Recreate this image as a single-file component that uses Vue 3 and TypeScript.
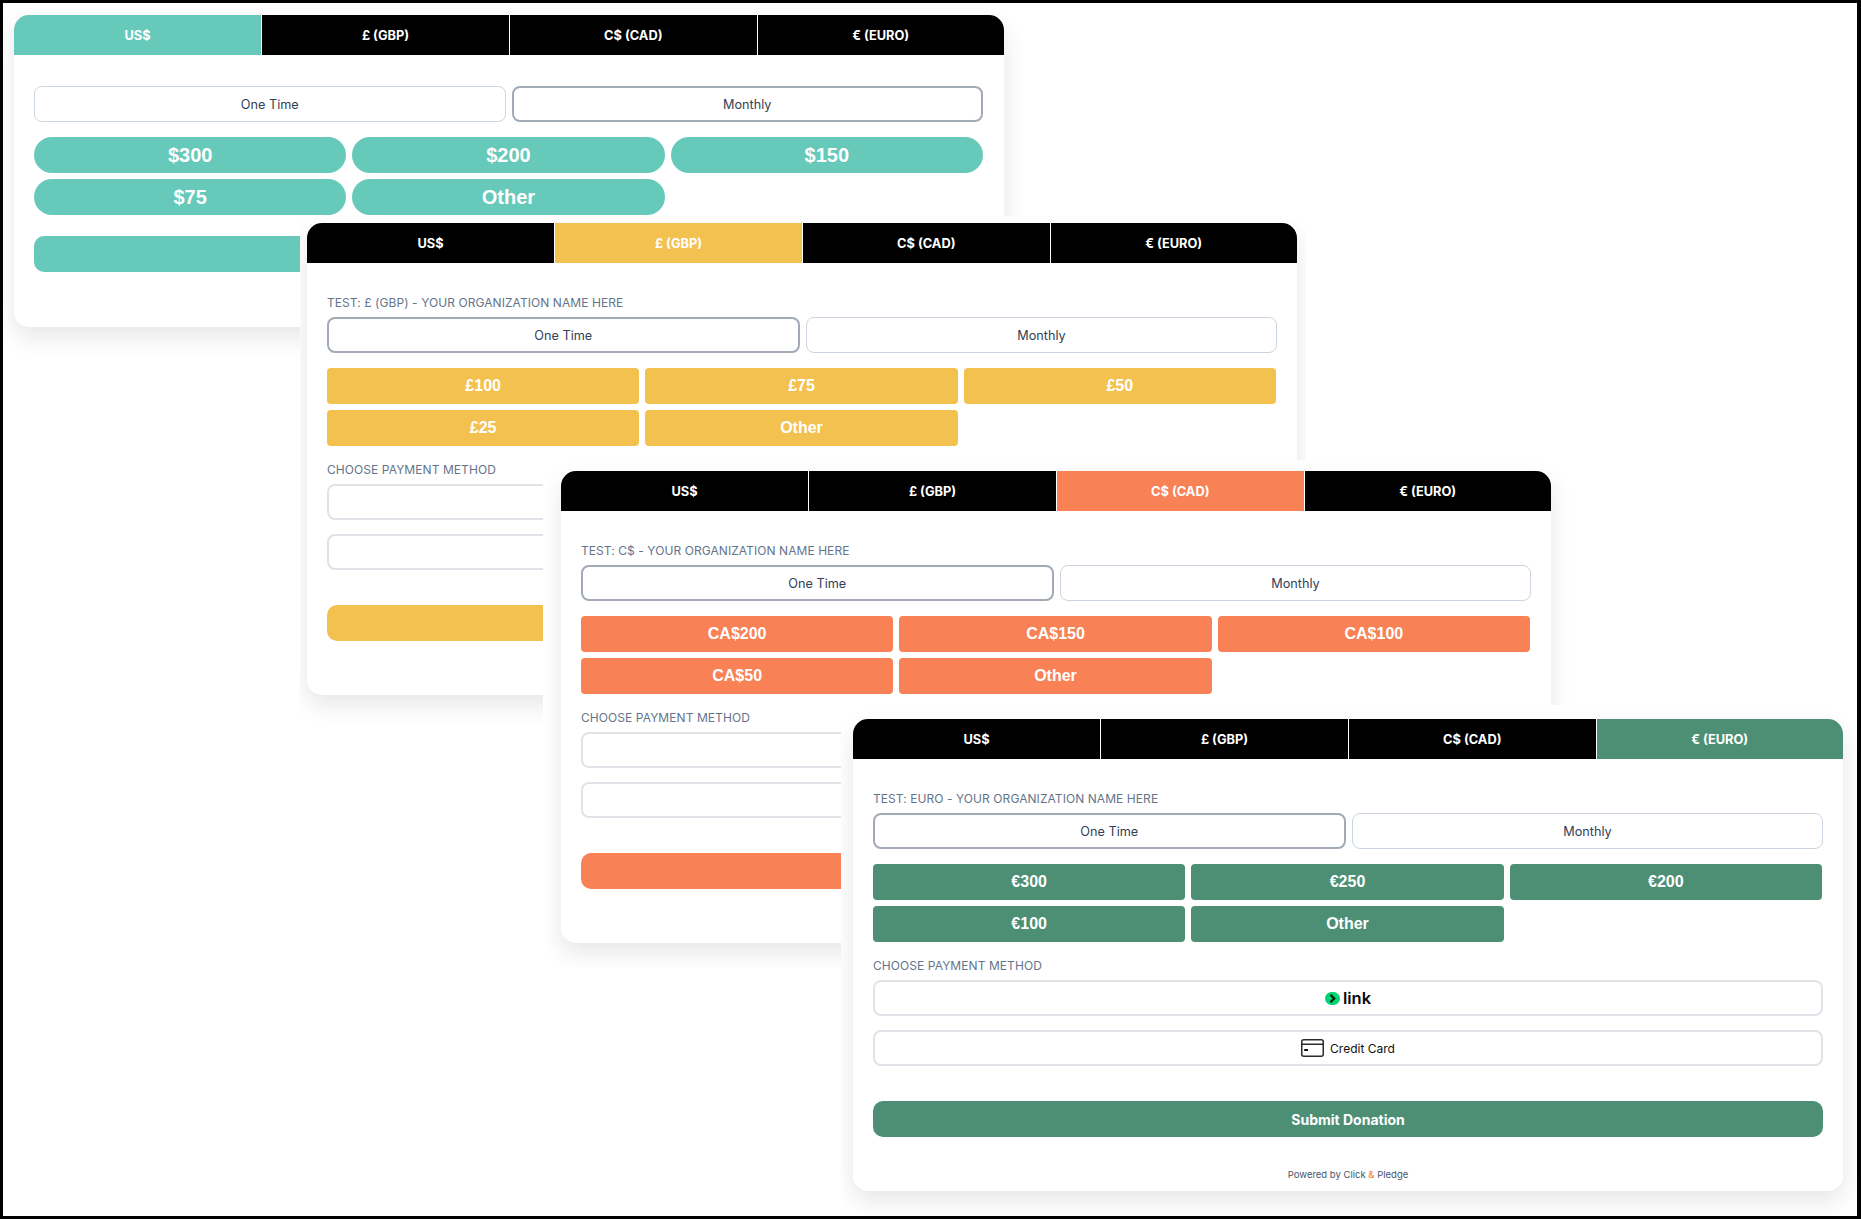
<script setup lang="ts">
interface Panel {
  id: string;
  active: number;
  label: string;
  amounts: string[];
  monthly: boolean;
  payments: boolean;
}

const tabs: string[] = ["US$", "£ (GBP)", "C$ (CAD)", "€ (EURO)"];

const panels: Panel[] = [
  { id: "usd", active: 0, label: "", amounts: ["$300", "$200", "$150", "$75", "Other"], monthly: true, payments: false },
  { id: "gbp", active: 1, label: "TEST: £ (GBP) - YOUR ORGANIZATION NAME HERE", amounts: ["£100", "£75", "£50", "£25", "Other"], monthly: false, payments: true },
  { id: "cad", active: 2, label: "TEST: C$ - YOUR ORGANIZATION NAME HERE", amounts: ["CA$200", "CA$150", "CA$100", "CA$50", "Other"], monthly: false, payments: true },
  { id: "eur", active: 3, label: "TEST: EURO - YOUR ORGANIZATION NAME HERE", amounts: ["€300", "€250", "€200", "€100", "Other"], monthly: false, payments: true },
];
</script>

<template>
  <div class="frame">
    <section v-for="p in panels" :key="p.id" class="shot" :class="p.id">
      <div class="card">
        <div class="tabs">
          <div v-for="(t, i) in tabs" :key="t" class="tab" :class="{ on: i === p.active }">{{ t }}</div>
        </div>
        <div class="body">
          <div v-if="p.label" class="label title">{{ p.label }}</div>
          <div class="toggle">
            <button class="freq" :class="{ sel: !p.monthly }">One Time</button>
            <button class="freq" :class="{ sel: p.monthly }">Monthly</button>
          </div>
          <div class="amounts">
            <button v-for="a in p.amounts" :key="a" class="amount">{{ a }}</button>
          </div>
          <template v-if="p.payments">
            <div class="label method">CHOOSE PAYMENT METHOD</div>
            <button class="pay">
              <svg class="link-mark" width="15" height="13" viewBox="0 0 15 13" aria-hidden="true">
                <rect width="15" height="13" rx="6.5" fill="#00d66f" />
                <path d="M5.4 2.8 9.2 6.5 5.4 10.2" fill="none" stroke="#011e0f" stroke-width="2.2" />
              </svg>
              <span class="link-word">link</span>
            </button>
            <button class="pay second">
              <svg width="23" height="18" viewBox="0 0 23 18" aria-hidden="true">
                <rect x="0.75" y="0.75" width="21.5" height="16.5" rx="2" fill="none" stroke="#2b2b2b" stroke-width="1.5" />
                <path d="M1 5.25H22" stroke="#2b2b2b" stroke-width="1.5" />
                <path d="M3.2 11H7" stroke="#111" stroke-width="2" />
              </svg>
              <span class="cc">Credit Card</span>
            </button>
          </template>
          <button class="submit">Submit Donation</button>
          <div class="powered">Powered by Click <span class="amp">&amp;</span> Pledge</div>
        </div>
      </div>
    </section>
  </div>
</template>

<style>
html,
body {
  margin: 0;
  background: #fff;
}
</style>

<style scoped>
.frame {
  position: relative;
  width: 1861px;
  height: 1219px;
  box-sizing: border-box;
  border: 3px solid #000;
  border-right-width: 4px;
  background: #fff;
  overflow: hidden;
  font-family: Inter, "Noto Sans", sans-serif;
}

/* Each panel is a pasted screenshot with its own white margin, free on the canvas */
.shot {
  position: absolute;
  box-sizing: border-box;
  overflow: hidden;
  background: #fff;
}
.usd {
  left: 0;
  top: 0;
  width: 1030px;
  height: 360px;
  padding: 12px 0 0 11px;
}
.gbp {
  left: 297px;
  top: 213px;
  width: 1006px;
  height: 509px;
  padding: 7px 0 0 7px;
}
.cad {
  left: 540px;
  top: 457px;
  width: 1030px;
  height: 508px;
  padding: 11px 0 0 18px;
}
.eur {
  left: 838px;
  top: 702px;
  width: 1019px;
  height: 514px;
  padding: 14px 0 0 12px;
}

.card {
  width: 990px;
  background: #fff;
  border-radius: 15px;
  box-shadow: 0 10px 25px rgba(0, 0, 0, 0.1);
}

.tabs {
  display: grid;
  grid-template-columns: 247px 248px 247.5px 1fr;
  height: 40px;
  border-radius: 15px 15px 0 0;
  overflow: hidden;
}
.tab {
  display: flex;
  align-items: center;
  justify-content: center;
  background: #000;
  color: #fff;
  font-size: 12.8px;
  font-weight: 700;
  border-left: 1px solid #fff;
}
.tab:first-child {
  border-left: 0;
}

.body {
  display: flex;
  flex-direction: column;
  padding: 32px 20px 0;
}

.label {
  color: #64748b;
  font-size: 12px;
  letter-spacing: 0.07px;
  font-weight: 400;
  line-height: 16px;
}
.title {
  margin-bottom: 6px;
}
.method {
  margin-top: 16px;
  margin-bottom: 6px;
}

button {
  font-family: inherit;
  cursor: pointer;
  margin: 0;
  padding: 0;
}

.toggle {
  display: grid;
  grid-template-columns: 472.5px 1fr;
  gap: 6.5px;
}
.freq {
  height: 36px;
  background: #fff;
  border: 1px solid #cbd5e1;
  border-radius: 8px;
  color: #334155;
  font-size: 12.7px;
  font-weight: 400;
}
.freq.sel {
  border: 2px solid #a2aab5;
}

.amounts {
  display: grid;
  grid-template-columns: repeat(3, 1fr);
  gap: 6px;
  margin: 15px 1px 0 0;
}
.amount {
  height: 36px;
  border: 0;
  border-radius: 4px;
  color: #fff;
  font-family: "Liberation Sans", Arial, sans-serif;
  font-size: 16px;
  font-weight: 700;
}

.pay {
  display: flex;
  align-items: center;
  justify-content: center;
  height: 36px;
  background: #fff;
  border: 2px solid #e0e4e9;
  border-radius: 8px;
}
.pay.second {
  margin-top: 14px;
}
.link-mark {
  margin-right: 3px;
}
.link-word {
  color: #0a0a0a;
  font-size: 16.5px;
  font-weight: 600;
  line-height: 1;
}
.cc {
  margin-left: 6px;
  color: #111;
  font-size: 12px;
  font-weight: 400;
}

.submit {
  height: 36px;
  margin-top: 35px;
  border: 0;
  border-radius: 10px;
  color: #fff;
  font-size: 14px;
  font-weight: 700;
}

.powered {
  height: 54px;
  padding-top: 31px;
  box-sizing: border-box;
  text-align: center;
  color: #475569;
  font-size: 9.5px;
  line-height: 14px;
}
.amp {
  color: #f97316;
}

/* Per-currency theme */
.usd .tab.on,
.usd .amount,
.usd .submit {
  background: #66c9ba;
}
.usd .body {
  padding: 31px 21px 0 20px;
}
.usd .toggle {
  grid-template-columns: 1fr 1fr;
  gap: 6px;
}
.usd .amounts {
  margin-right: 0;
}
.usd .amount {
  border-radius: 18px;
  font-size: 20px;
}
.usd .submit {
  margin-top: 21px;
}
.usd .powered {
  height: 55px;
}
.gbp .tab.on,
.gbp .amount,
.gbp .submit {
  background: #f3c14f;
}
.cad .tab.on,
.cad .amount,
.cad .submit {
  background: #f88156;
}
.eur .tab.on,
.eur .amount,
.eur .submit {
  background: #4c8f75;
}
</style>
